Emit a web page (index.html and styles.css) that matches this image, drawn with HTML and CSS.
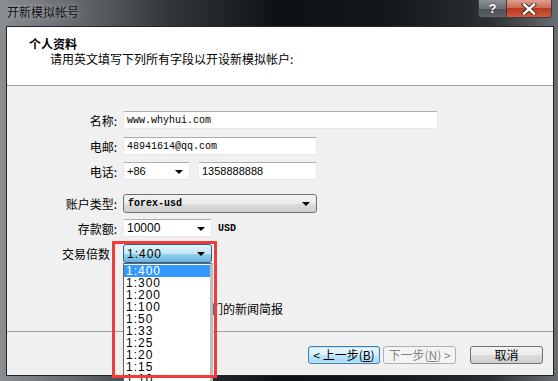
FILE: index.html
```html
<!DOCTYPE html>
<html lang="zh-CN">
<head>
    <meta charset="UTF-8">
    <title>开新模拟帐号</title>
    <link rel="stylesheet" href="styles.css">
</head>
<body>
    <div class="window">
        <div class="titlebar">
            <span class="title">开新模拟帐号</span>
            <div class="caption-buttons">
                <span class="cap-btn help">?</span>
                <span class="cap-btn close">
                    <svg width="16" height="12" viewBox="0 0 16 12">
                        <path d="M3 1.5 L13 10.5 M13 1.5 L3 10.5" stroke="#3a2a26" stroke-width="4.2" stroke-linecap="square"/>
                        <path d="M3 1.5 L13 10.5 M13 1.5 L3 10.5" stroke="#ffffff" stroke-width="2.4" stroke-linecap="square"/>
                    </svg>
                </span>
            </div>
        </div>

        <div class="client">
            <div class="header">
                <div class="header-title">个人资料</div>
                <div class="header-sub">请用英文填写下列所有字段以开设新模拟帐户:</div>
            </div>

            <div class="form">
                <div class="row row-name">
                    <label class="label">名称:</label>
                    <div class="textbox mono w-wide">www.whyhui.com</div>
                </div>
                <div class="row row-email">
                    <label class="label">电邮:</label>
                    <div class="textbox mono w-mid">48941614@qq.com</div>
                </div>
                <div class="row row-phone">
                    <label class="label">电话:</label>
                    <div class="combo w-code"><span>+86</span><i class="arrow"></i></div>
                    <div class="textbox w-phone">1358888888</div>
                </div>
                <div class="row row-type">
                    <label class="label">账户类型:</label>
                    <div class="combo combo-gray w-mid"><span class="mono bold">forex-usd</span><i class="arrow"></i></div>
                </div>
                <div class="row row-deposit">
                    <label class="label">存款额:</label>
                    <div class="combo combo-num w-small"><span>10000</span><i class="arrow"></i></div>
                    <span class="unit mono bold">USD</span>
                </div>
                <div class="row row-leverage">
                    <label class="label nocolon">交易倍数</label>
                    <div class="combo-wrap">
                        <div class="combo combo-open w-small"><span>1:400</span><i class="arrow"></i></div>
                        <ul class="droplist">
                            <li class="selected">1:400</li>
                            <li>1:300</li>
                            <li>1:200</li>
                            <li>1:100</li>
                            <li>1:50</li>
                            <li>1:33</li>
                            <li>1:25</li>
                            <li>1:20</li>
                            <li>1:15</li>
                            <li>1:10</li>
                        </ul>
                    </div>
                </div>
                <div class="row row-news">
                    <span class="checkbox"></span>
                    <span>我愿意接收你们的新闻简报</span>
                </div>
            </div>

            <div class="footer">
                <button class="btn btn-hot">&lt; 上一步(<u>B</u>)</button>
                <button class="btn" disabled>下一步(<u>N</u>) &gt;</button>
                <button class="btn btn-cancel">取消</button>
            </div>
        </div>

        <div class="mark-box"></div>
    </div>
</body>
</html>
```

FILE: styles.css
```css
body {
    margin: 0;
    background-color: #1c2024;
    font-family: "Noto Sans CJK SC", "Liberation Sans", sans-serif;
    font-size: 12px;
    color: #000;
}
.window {
    position: relative;
    width: 558px;
    height: 381px;
    box-sizing: border-box;
    padding: 0 4px 5px 6px;
    overflow: hidden;
    background: linear-gradient(90deg, #8a8e91 0%, #6a6e72 12%, #33373b 30%, #0e1114 50%, #14181c 70%, #2c3034 88%, #6a6e72 100%);
}
.titlebar {
    display: flex;
    align-items: flex-start;
    height: 26px;
}
.title {
    padding: 4px 0 0 1px;
    line-height: 16px;
    color: #111;
    text-shadow: 0 0 6px rgba(220, 225, 230, 0.7);
}
.caption-buttons {
    display: flex;
    margin-left: auto;
    margin-right: 2px;
}
.cap-btn {
    display: flex;
    align-items: center;
    justify-content: center;
    height: 18px;
    box-sizing: border-box;
    border: 1px solid #3a3e42;
    border-top: none;
}
.help {
    width: 28px;
    border-radius: 0 0 0 4px;
    border-right: none;
    background: linear-gradient(#8e9296, #6c7074 50%, #4c5054 51%, #5e6266);
    color: #fff;
    font-family: "Liberation Sans", sans-serif;
    font-weight: bold;
    font-size: 13px;
    text-shadow: 0 0 2px #222;
}
.close {
    width: 46px;
    border-radius: 0 0 4px 0;
    background: linear-gradient(#e0a090, #cf6a54 45%, #b83a20 50%, #d4583c);
}
.client {
    height: 350px;
    box-sizing: border-box;
    border: 1px solid #202428;
    background-color: #f0f0f0;
}
.header {
    height: 59px;
    box-sizing: border-box;
    padding: 9px 0 0 22px;
    background-color: #fff;
    border-bottom: 1px solid #a0a0a0;
}
.header-title {
    font-weight: bold;
    line-height: 15px;
}
.header-sub {
    padding-left: 21px;
    line-height: 15px;
}
.form {
    height: 245px;
    box-sizing: border-box;
    padding-top: 25px;
}
.row {
    display: flex;
    align-items: center;
}
.row-email { margin-top: 8px; }
.row-phone { margin-top: 7px; }
.row-type { margin-top: 14px; }
.row-deposit { margin-top: 6px; }
.row-leverage { margin-top: 7px; }
.row-news {
    margin-top: 38px;
    padding-left: 116px;
    line-height: 16px;
}
.label {
    width: 110px;
    margin-right: 6px;
    text-align: right;
}
.label.nocolon {
    width: 103px;
    margin-right: 13px;
}
.mono {
    font-family: "Liberation Mono", "Noto Sans CJK SC", monospace;
    font-size: 10px;
}
.bold {
    font-weight: bold;
}
.textbox,
.combo {
    display: flex;
    align-items: center;
    height: 18px;
    box-sizing: border-box;
    padding-left: 3px;
    background-color: #fff;
    border: 1px solid #e3e9ef;
    border-top-color: #abadb3;
    border-radius: 2px;
    font-family: "Liberation Sans", sans-serif;
    font-size: 11px;
}
.textbox.mono {
    font-family: "Liberation Mono", monospace;
    font-size: 10px;
}
.w-wide { width: 315px; }
.w-mid { width: 194px; }
.w-code { width: 67px; margin-right: 8px; }
.w-phone { width: 119px; }
.w-small { width: 89px; }
.combo {
    position: relative;
    padding-right: 20px;
}
.combo-num {
    font-size: 12px;
}
.arrow {
    position: absolute;
    right: 6px;
    top: 7px;
    width: 0;
    height: 0;
    border-left: 4px solid transparent;
    border-right: 4px solid transparent;
    border-top: 4px solid #000;
}
.combo-gray {
    height: 19px;
    padding-left: 4px;
    border: 1px solid #707070;
    border-radius: 3px;
    background: linear-gradient(#f2f2f2, #ebebeb 50%, #dddddd 51%, #cfcfcf);
}
.combo-open {
    height: 19px;
    border: 1px solid #2c628b;
    border-radius: 3px;
    background: linear-gradient(#e5f4fc, #c4e5f6 50%, #98d1ef 51%, #68b3db);
    font-size: 12px;
    letter-spacing: 1px;
}
.unit {
    margin-left: 6px;
}
.combo-wrap {
    position: relative;
}
.droplist {
    position: absolute;
    left: 0;
    top: 100%;
    z-index: 2;
    width: 90px;
    height: 130px;
    margin: 0;
    padding: 1px 0 0;
    box-sizing: border-box;
    list-style: none;
    background-color: #fff;
    border: 1px solid #646464;
    border-right: 3px solid #bdbdbd;
    font-family: "Liberation Sans", sans-serif;
    font-size: 12px;
    letter-spacing: 1px;
}
.droplist li {
    height: 12px;
    line-height: 12px;
    padding-left: 2px;
}
.droplist li.selected {
    background-color: #3399ff;
    color: #fff;
}
.checkbox {
    width: 13px;
    height: 13px;
    box-sizing: border-box;
    margin-right: 3px;
    border: 1px solid #8f8f8f;
    background-color: #fff;
}
.footer {
    display: flex;
    justify-content: flex-end;
    gap: 3px;
    height: 43px;
    box-sizing: border-box;
    padding: 14px 10px 0 0;
    border-top: 1px solid #a0a0a0;
}
.btn {
    width: 72px;
    height: 18px;
    padding: 0;
    border: 1px solid #707070;
    border-radius: 3px;
    background: linear-gradient(#f2f2f2, #ebebeb 50%, #dddddd 51%, #cfcfcf);
    font-family: "Noto Sans CJK SC", sans-serif;
    font-size: 12px;
    line-height: 16px;
    color: #000;
}
.btn-hot {
    border-color: #3c7fb1;
    background: linear-gradient(#eaf6fd, #d9f0fc 50%, #bee6fd 51%, #a7d9f5);
    box-shadow: inset 0 0 0 1px #c4e5f6;
}
.btn:disabled {
    width: 73px;
    border-color: #adb2b5;
    background: #f4f4f4;
    color: #838383;
}
.btn-cancel {
    width: 73px;
    margin-left: 11px;
}
.mark-box {
    position: absolute;
    left: 112px;
    top: 241px;
    z-index: 3;
    width: 105px;
    height: 137px;
    box-sizing: border-box;
    border: 3px solid #f03c3c;
}
```
